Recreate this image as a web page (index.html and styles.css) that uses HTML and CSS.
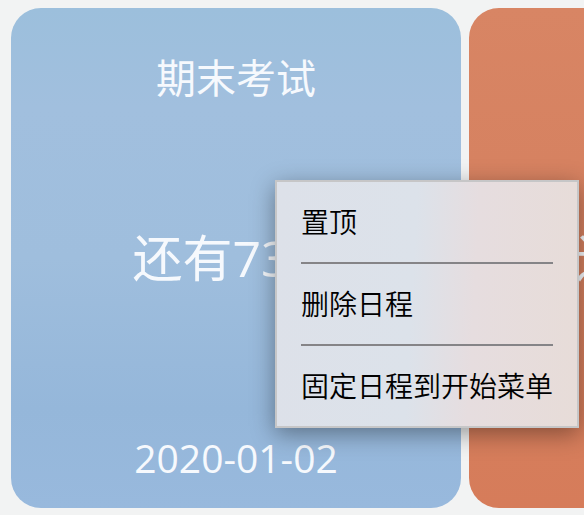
FILE: index.html
```html
<!DOCTYPE html>
<html lang="zh-CN">
<head>
<meta charset="utf-8">
<meta name="viewport" content="width=device-width, initial-scale=1">
<title>日程</title>
<link rel="stylesheet" href="styles.css">
</head>
<body>
<main class="board">
  <article class="card card-blue">
    <h2 class="card-title">期末考试</h2>
    <p class="card-count">还有73天</p>
    <time class="card-date" datetime="2020-01-02">2020-01-02</time>
  </article>
  <article class="card card-orange">
    <p class="card-count">还有156天</p>
  </article>
</main>
<div class="menu" role="menu">
  <button class="menu-item" type="button" role="menuitem">置顶</button>
  <button class="menu-item" type="button" role="menuitem">删除日程</button>
  <button class="menu-item" type="button" role="menuitem">固定日程到开始菜单</button>
</div>
</body>
</html>
```

FILE: styles.css
```css
* {
  box-sizing: border-box;
}

body {
  margin: 0;
  overflow: hidden;
  background: #f2f3f3;
  color: #f6f9fd;
  font-family: "Open Sans", "Noto Sans CJK SC", sans-serif;
  font-weight: 400;
}

.board {
  display: flex;
  gap: 8px;
  min-height: 100vh;
  padding: 8px 11px 7px;
}

.card {
  flex: 0 0 450px;
  display: grid;
  grid-template-rows: 60px 1fr 80px;
  align-items: center;
  justify-items: center;
  padding: 40px 24px 20px;
  border-radius: 30px;
}

.card-blue {
  background: linear-gradient(180deg, #9cbfdc 0%, #a1bfde 20%, #9fbedd 50%, #95b7da 80%, #98b9dd 100%);
}

.card-orange {
  background: linear-gradient(180deg, #d88564 0%, #d5805f 50%, #d67c5a 100%);
}

.card-title,
.card-count {
  margin: 0;
  font-weight: 400;
  white-space: nowrap;
}

.card-title {
  font-size: 40px;
  line-height: 60px;
}

.card-count {
  grid-row: 2;
  font-size: 50px;
  line-height: 60px;
}

.card-date {
  align-self: end;
  font-size: 39px;
  line-height: 60px;
}

.menu {
  position: absolute;
  top: 180px;
  left: 275px;
  padding: 0 24px;
  border: 2px solid #c6c6c7;
  background: linear-gradient(93deg, #dde1e9 0%, #dce2ea 45%, #e6dddf 65%, #e7dcd8 100%);
  box-shadow: 0 6px 22px rgba(0, 0, 0, 0.38);
}

.menu-item {
  display: block;
  width: 100%;
  padding: 20px 0;
  border: 0;
  background: none;
  color: #000;
  font: inherit;
  font-size: 28px;
  font-weight: 360;
  line-height: 40px;
  text-align: left;
  white-space: nowrap;
}

.menu-item + .menu-item {
  border-top: 2px solid #858487;
}
```
